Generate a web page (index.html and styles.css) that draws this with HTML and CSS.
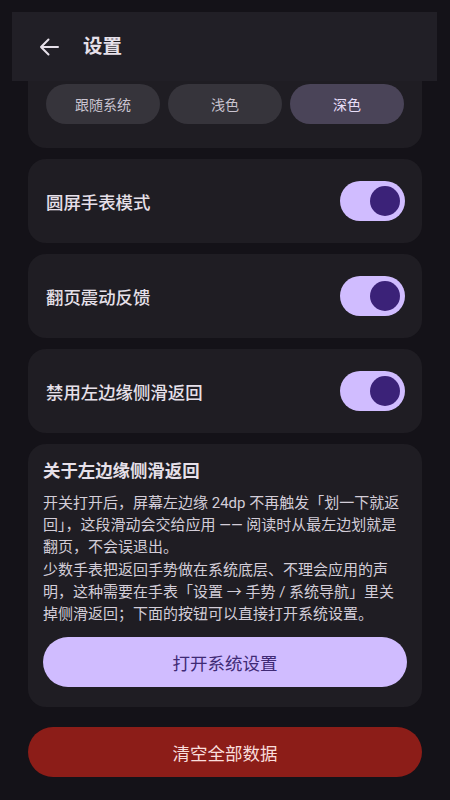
FILE: index.html
```html
<!DOCTYPE html>
<html lang="zh-CN">
<head>
<meta charset="utf-8">
<link rel="stylesheet" href="styles.css">
</head>
<body>
<header class="topbar">
  <svg class="back" width="22" height="22" viewBox="0 0 22 22"><path d="M20 11H3M10.5 3.5L3 11l7.5 7.5" fill="none" stroke="#e6e0e9" stroke-width="2" stroke-linecap="round" stroke-linejoin="round"/></svg>
  <h1 class="title">设置</h1>
</header>
<main class="content">
  <section class="card theme-card">
    <div class="chips">
      <div class="chip">跟随系统</div>
      <div class="chip">浅色</div>
      <div class="chip chip-selected">深色</div>
    </div>
  </section>
  <section class="card row-card">
    <span class="row-label">圆屏手表模式</span>
    <span class="switch"><span class="thumb"></span></span>
  </section>
  <section class="card row-card">
    <span class="row-label">翻页震动反馈</span>
    <span class="switch"><span class="thumb"></span></span>
  </section>
  <section class="card row-card">
    <span class="row-label">禁用左边缘侧滑返回</span>
    <span class="switch"><span class="thumb"></span></span>
  </section>
  <section class="card info-card">
    <h2 class="info-title">关于左边缘侧滑返回</h2>
    <p class="info-text">开关打开后，屏幕左边缘 24dp 不再触发「划一下就返回」，这段滑动会交给应用 —— 阅读时从最左边划就是翻页，不会误退出。</p>
    <p class="info-text">少数手表把返回手势做在系统底层、不理会应用的声明，这种需要在手表「设置 → 手势 / 系统导航」里关掉侧滑返回；下面的按钮可以直接打开系统设置。</p>
    <button class="btn btn-primary">打开系统设置</button>
  </section>
  <button class="btn btn-danger">清空全部数据</button>
</main>
</body>
</html>
```
FILE: styles.css
```css
* { box-sizing: border-box; }
html, body {
  margin: 0;
  padding: 0;
  background: #141218;
  font-family: Roboto, "Noto Sans CJK SC", "Noto Sans", sans-serif;
  color: #e6e0e9;
}
body { width: 450px; height: 800px; overflow: hidden; }

.topbar {
  position: absolute;
  top: 12px;
  left: 12px;
  width: 425px;
  height: 69px;
  background: #211f26;
  display: flex;
  align-items: center;
  z-index: 2;
}
.back { margin-left: 26px; margin-right: 0; flex: none; }
.title {
  margin: 0 0 0 23px;
  font-size: 19.5px;
  font-weight: 700;
  color: #e6e0e9;
  line-height: 1;
}

.content {
  padding: 20px 28px 0;
  display: flex;
  flex-direction: column;
  gap: 11px;
}
.card {
  background: #1f1d23;
  border-radius: 18px;
}
.theme-card {
  padding: 64px 18px 24px;
}
.chips {
  display: grid;
  grid-template-columns: repeat(3, 1fr);
  gap: 8px;
}
.chip {
  height: 40px;
  border-radius: 20px;
  background: #36343b;
  color: #cac4d0;
  font-size: 14px;
  display: flex;
  align-items: center;
  justify-content: center;
}
.chip-selected { background: #4a4458; color: #e8def8; }

.row-card {
  height: 84px;
  padding: 0 17px 0 18px;
  display: flex;
  align-items: center;
  justify-content: space-between;
}
.row-label { font-size: 17.4px; font-weight: 500; color: #e6e0e9; }
.switch {
  width: 65px;
  height: 40px;
  border-radius: 20px;
  background: #d0bcff;
  display: flex;
  align-items: center;
  justify-content: flex-end;
  padding-right: 5px;
}
.thumb {
  width: 30px;
  height: 30px;
  border-radius: 50%;
  background: #3b2278;
}

.info-card {
  padding: 15px 15px 20px;
  display: flex;
  flex-direction: column;
}
.info-title {
  margin: 0 0 9px;
  font-size: 17.4px;
  line-height: 24px;
  font-weight: 700;
  color: #e6e0e9;
}
.info-text {
  margin: 0;
  padding-right: 6px;
  font-size: 15px;
  line-height: 22.2px;
  color: #d3cdd8;
}
.btn {
  border: none;
  height: 50px;
  border-radius: 25px;
  font-family: inherit;
  font-size: 17.5px;
  display: flex;
  align-items: center;
  justify-content: center;
  width: 100%;
  padding: 0;
}
.btn-primary {
  margin-top: 12px;
  background: #d0bcff;
  color: #3f2a75;
}
.btn-danger {
  margin-top: 9px;
  background: #8c1d18;
  color: #f9dedc;
}
```
